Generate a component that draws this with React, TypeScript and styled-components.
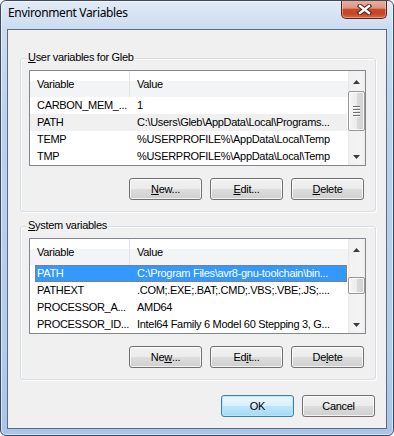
import React from "react";
import styled, { createGlobalStyle } from "styled-components";

const GlobalStyle = createGlobalStyle`
  html, body { margin: 0; padding: 0; background: #ffffff; }
  body { font-family: "Liberation Sans", Arial, sans-serif; font-size: 11px; letter-spacing: -0.3px; color: #000; }
  * { box-sizing: border-box; }
`;

const Window = styled.div`
  width: 394px;
  height: 436px;
  border: 1px solid #3b4a5d;
  border-radius: 6px;
  padding: 0 6px 6px 6px;
  display: flex;
  flex-direction: column;
  background: linear-gradient(180deg, #e2ebf7 0px, #cbdcf1 28px, #bad2ee 120px, #b2ccec 80%, #a8c5e9 100%);
  box-shadow: inset 0 0 0 1px rgba(255, 255, 255, 0.55);
  overflow: hidden;
`;

const TitleBar = styled.div`
  height: 28px;
  flex: none;
  display: flex;
  justify-content: space-between;
  align-items: flex-start;
`;

const TitleText = styled.div`
  font-family: "Segoe UI", "Noto Sans", sans-serif;
  font-size: 12px;
  line-height: 16px;
  letter-spacing: -0.35px;
  padding: 4px 0 0 1px;
  color: #000;
`;

const CloseButton = styled.div`
  width: 46px;
  height: 19px;
  margin-top: -1px;
  border: 1px solid #5e2418;
  border-top: none;
  border-radius: 0 0 5px 5px;
  background: linear-gradient(180deg, #eab0a2 0%, #de9582 45%, #c8492f 52%, #c54328 75%, #d4693f 100%);
  box-shadow: inset 0 0 0 1px rgba(255, 210, 190, 0.45);
  display: flex;
  align-items: center;
  justify-content: center;
`;

const Client = styled.div`
  flex: 1;
  border: 1px solid #5b6c82;
  background: #f0f0f0;
  padding: 28px 10px 11px 12px;
  display: flex;
  flex-direction: column;
`;

const GroupBox = styled.div<{ $gap?: number }>`
  position: relative;
  margin-top: ${(p) => p.$gap ?? 0}px;
  border: 1px solid #d5dfe5;
  border-radius: 3px;
  box-shadow: inset 1px 1px 0 #ffffff, 1px 1px 0 #ffffff;
  padding: 11px 9px 11px 8px;
  display: flex;
  flex-direction: column;
`;

const Legend = styled.div`
  position: absolute;
  top: -8px;
  left: 6px;
  padding: 0 1px;
  line-height: 13px;
  background: #f0f0f0;
`;

const ListBox = styled.div`
  height: 96px;
  flex: none;
  border: 1px solid #828790;
  background: #ffffff;
  display: flex;
`;

const ListBody = styled.div`
  flex: 1;
  min-width: 0;
  display: flex;
  flex-direction: column;
  overflow: hidden;
`;

const Header = styled.div`
  height: 26px;
  flex: none;
  display: flex;
  background: linear-gradient(180deg, #ffffff 0px, #ffffff 10px, #f3f4f6 10px, #f3f4f6 100%);
`;

const HeaderCell = styled.div<{ $width?: number }>`
  ${(p) => (p.$width ? `width: ${p.$width}px; flex: none; border-right: 1px solid #e2e4e8;` : "flex: 1;")}
  padding: 7px 0 0 7px;
  line-height: 13px;
  white-space: nowrap;
  overflow: hidden;
`;

const Row = styled.div<{ $state?: "inactive" | "active" }>`
  height: 17px;
  flex: none;
  display: flex;
  line-height: 17px;
  margin-left: ${(p) => (p.$state === "active" ? 5 : 0)}px;
  margin-right: 1px;
  white-space: nowrap;
  background: ${(p) => (p.$state === "active" ? "#3399ff" : p.$state === "inactive" ? "#f0f0f0" : "transparent")};
  color: ${(p) => (p.$state === "active" ? "#ffffff" : "#000000")};
  outline: ${(p) => (p.$state === "active" ? "1px dotted #cc6600" : "none")};
  outline-offset: -1px;
`;

const NameCell = styled.div<{ $inset: number }>`
  width: ${(p) => 100 - p.$inset}px;
  flex: none;
  padding-left: ${(p) => 7 - p.$inset}px;
  overflow: hidden;
`;

const ValueCell = styled.div`
  flex: 1;
  min-width: 0;
  padding-left: 7px;
  overflow: hidden;
`;

const ScrollBar = styled.div`
  width: 17px;
  flex: none;
  display: flex;
  flex-direction: column;
  background: linear-gradient(90deg, #e6e6e6 0px, #f2f2f2 2px, #f4f4f4 14px, #ebebeb 17px);
`;

const ArrowButton = styled.div<{ $up?: boolean }>`
  height: 17px;
  flex: none;
  display: flex;
  justify-content: center;
  align-items: ${(p) => (p.$up ? "flex-end" : "center")};
  padding-bottom: ${(p) => (p.$up ? 4 : 0)}px;
`;

const Track = styled.div`
  flex: 1;
  display: flex;
  flex-direction: column;
`;

const Thumb = styled.div`
  flex: none;
  border: 1px solid #979797;
  border-radius: 2px;
  background: linear-gradient(90deg, #f6f6f6 0%, #ececec 50%, #dadada 51%, #d3d3d3 100%);
  box-shadow: inset 0 0 0 1px rgba(255, 255, 255, 0.8);
  display: flex;
  flex-direction: column;
  align-items: center;
  justify-content: center;
  gap: 1px;
`;

const Grip = styled.div`
  width: 7px;
  height: 1px;
  background: #6e6e6e;
  box-shadow: 0 1px 0 #ffffff;
  margin-bottom: 1px;
`;

const ButtonRow = styled.div<{ $top: number; $right: number }>`
  display: flex;
  justify-content: flex-end;
  gap: 8px;
  margin-top: ${(p) => p.$top}px;
  padding-right: ${(p) => p.$right}px;
`;

const Button = styled.div<{ $default?: boolean }>`
  width: 73px;
  height: 22px;
  flex: none;
  border: 1px solid ${(p) => (p.$default ? "#3c7fb1" : "#707070")};
  border-radius: 3px;
  background: ${(p) =>
    p.$default
      ? "linear-gradient(180deg, #eaf6fd 0%, #d9f0fc 50%, #bee6fd 50%, #a7d9f5 100%)"
      : "linear-gradient(180deg, #f2f2f2 0%, #ebebeb 50%, #dddddd 50%, #cfcfcf 100%)"};
  box-shadow: inset 0 0 0 1px ${(p) => (p.$default ? "rgba(180,230,252,0.9)" : "rgba(255,255,255,0.75)")};
  display: flex;
  align-items: center;
  justify-content: center;
  line-height: 13px;
  padding-top: 1px;
  u { text-decoration: underline; text-underline-offset: 1px; }
`;

type Item = [string, string, ("inactive" | "active")?];

const userVars: Item[] = [
  ["CARBON_MEM_...", "1"],
  ["PATH", "C:\\Users\\Gleb\\AppData\\Local\\Programs...", "inactive"],
  ["TEMP", "%USERPROFILE%\\AppData\\Local\\Temp"],
  ["TMP", "%USERPROFILE%\\AppData\\Local\\Temp"],
];

const systemVars: Item[] = [
  ["PATH", "C:\\Program Files\\avr8-gnu-toolchain\\bin...", "active"],
  ["PATHEXT", ".COM;.EXE;.BAT;.CMD;.VBS;.VBE;.JS;...."],
  ["PROCESSOR_A...", "AMD64"],
  ["PROCESSOR_ID...", "Intel64 Family 6 Model 60 Stepping 3, G..."],
];

const UpArrow = () => (
  <svg width="7" height="4" viewBox="0 0 7 4">
    <polygon points="0,4 3.5,0 7,4" fill="#3a3a3a" />
  </svg>
);

const DownArrow = () => (
  <svg width="7" height="4" viewBox="0 0 7 4">
    <polygon points="0,0 7,0 3.5,4" fill="#3a3a3a" />
  </svg>
);

const CloseGlyph = () => (
  <svg width="15" height="11" viewBox="0 0 15 11">
    <g strokeLinecap="square">
      <path d="M3 2 L12 9 M12 2 L3 9" stroke="#4b1d14" strokeWidth="4.4" />
      <path d="M3 2 L12 9 M12 2 L3 9" stroke="#ffffff" strokeWidth="2.4" />
    </g>
  </svg>
);

function VarList({ items, thumbTop, thumbHeight, grip }: { items: Item[]; thumbTop: number; thumbHeight: number; grip?: boolean }) {
  return (
    <ListBox>
      <ListBody>
        <Header>
          <HeaderCell $width={100}>Variable</HeaderCell>
          <HeaderCell>Value</HeaderCell>
        </Header>
        {items.map(([name, value, state], i) => {
          const inset = state === "active" ? 5 : 0;
          return (
            <Row key={i} $state={state}>
              <NameCell $inset={inset}>{name}</NameCell>
              <ValueCell>{value}</ValueCell>
            </Row>
          );
        })}
      </ListBody>
      <ScrollBar>
        <ArrowButton $up>
          <UpArrow />
        </ArrowButton>
        <Track>
          <Thumb style={{ marginTop: thumbTop, height: thumbHeight }}>
            {grip && (
              <>
                <Grip />
                <Grip />
                <Grip />
                <Grip />
              </>
            )}
          </Thumb>
        </Track>
        <ArrowButton>
          <DownArrow />
        </ArrowButton>
      </ScrollBar>
    </ListBox>
  );
}

export default function App() {
  return (
    <>
      <GlobalStyle />
      <Window>
        <TitleBar>
          <TitleText>Environment Variables</TitleText>
          <CloseButton>
            <CloseGlyph />
          </CloseButton>
        </TitleBar>
        <Client>
          <GroupBox>
            <Legend>
              <u>U</u>ser variables for Gleb
            </Legend>
            <VarList items={userVars} thumbTop={3} thumbHeight={40} grip />
            <ButtonRow $top={12} $right={2}>
              <Button>
                <u>N</u>ew...
              </Button>
              <Button>
                <u>E</u>dit...
              </Button>
              <Button>
                <u>D</u>elete
              </Button>
            </ButtonRow>
          </GroupBox>
          <GroupBox $gap={14}>
            <Legend>
              <u>S</u>ystem variables
            </Legend>
            <VarList items={systemVars} thumbTop={21} thumbHeight={17} />
            <ButtonRow $top={12} $right={2}>
              <Button>
                Ne<u>w</u>...
              </Button>
              <Button>
                Ed<u>i</u>t...
              </Button>
              <Button>
                De<u>l</u>ete
              </Button>
            </ButtonRow>
          </GroupBox>
          <ButtonRow $top={15} $right={1}>
            <Button $default>OK</Button>
            <Button>Cancel</Button>
          </ButtonRow>
        </Client>
      </Window>
    </>
  );
}
